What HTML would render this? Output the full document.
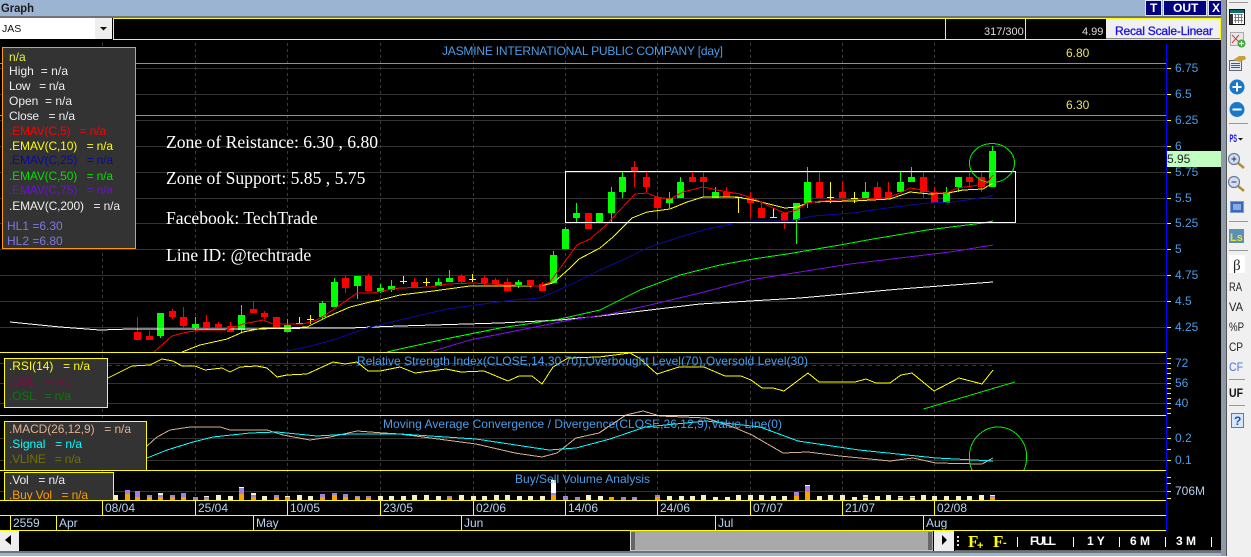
<!DOCTYPE html>
<html><head><meta charset="utf-8"><title>Graph</title>
<style>
html,body{margin:0;padding:0;background:#000;width:1251px;height:557px;overflow:hidden}
svg{display:block;position:absolute;left:0;top:0}
text{font-family:"Liberation Sans",sans-serif;font-size:12px;white-space:pre}
.ax{fill:#4a9de8}.dt{fill:#b8d4f0;font-size:12px}.s{fill:#4a9de8}
.lg{fill:#eee}
.ns{font-family:"Liberation Serif",serif;font-size:17.6px;fill:#fff}
.nb{fill:#fff;font-weight:bold;font-size:12px}
.sb{fill:#222;font-size:12px}
</style></head><body>
<svg width="1251" height="557" viewBox="0 0 1251 557" xmlns="http://www.w3.org/2000/svg">
<rect width="1251" height="557" fill="#000"/>
<!-- title bar -->
<rect width="1226" height="16" fill="#9ab4d2"/>
<rect y="16" width="1226" height="2" fill="#6f7276"/>
<text x="1" y="12" style="font-weight:bold;font-size:12px" fill="#1a1a1a" textLength="33" lengthAdjust="spacingAndGlyphs">Graph</text>
<g>
<rect x="1145.5" y=".5" width="16" height="15" fill="#000080" stroke="#dfe6ef"/>
<rect x="1163.5" y=".5" width="43" height="15" fill="#000080" stroke="#dfe6ef"/>
<rect x="1208.5" y=".5" width="16" height="15" fill="#000080" stroke="#dfe6ef"/>
<text x="1150" y="12" style="font-weight:bold;font-size:12px" fill="#fff">T</text>
<text x="1173" y="12" style="font-weight:bold;font-size:12px" fill="#fff">OUT</text>
<text x="1212" y="12" style="font-weight:bold;font-size:12px" fill="#fff">X</text>
</g>
<!-- toolbar -->
<rect x="0" y="18" width="112" height="21" fill="#fff"/>
<rect x="95" y="18" width="17" height="21" fill="#eee"/>
<path d="M100 27h7l-3.5 3.5z" fill="#111"/>
<text x="2" y="32" style="font-size:10.5px" fill="#111">JAS</text>
<rect x="113.5" y="18.5" width="1107" height="21" fill="#000" stroke="#ffff00"/>
<path d="M945.5 18V40M1025.5 18V40" stroke="#ffff00"/>
<rect x="1106" y="19" width="114" height="20" fill="#f0f0f0"/>
<path d="M1106 38.5H1220" stroke="#888"/>
<text x="1115" y="35" fill="#1a10e0" stroke="#1a10e0" stroke-width=".3" textLength="98" style="font-size:12px">Recal Scale-Linear</text>
<text x="984" y="35" fill="#ddd" style="font-size:11px">317/300</text>
<text x="1082" y="35" fill="#ddd" style="font-size:11px">4.99</text>
<!-- grid -->
<path d="M0 68.5H1166M0 94.5H1166M0 120.5H1166M0 146.5H1166M0 172.5H1166M0 198.5H1166M0 223.5H1166M0 249.5H1166M0 275.5H1166M0 301.5H1166M0 327.5H1166M0 363.5H1166M0 383.5H1166M0 403.5H1166M0 438.5H1166M0 460.5H1166M0 491.5H1166" stroke="#333" fill="none"/>
<path d="M102.5 43V500M195.5 43V500M287.5 43V500M380.5 43V500M473.5 43V500M565.5 43V500M657.5 43V500M750.5 43V500M842.5 43V500M934.5 43V500" stroke="#3a3a3a" stroke-dasharray="3 3" fill="none"/>
<path d="M0 63.5H1166M0 115.5H1166" stroke="#8a86d8"/>
<text x="1066" y="57" fill="#ece070">6.80</text>
<text x="1066" y="109" fill="#ece070">6.30</text>
<text x="442" y="55" class="s" textLength="281">JASMINE INTERNATIONAL PUBLIC COMPANY [day]</text>
<!-- candles -->
<g fill="none" shape-rendering="crispEdges">
<path stroke="#00ff00" stroke-width="1" d="M160.5 313V338M195.5 317V330M241.5 305V332M287.5 319V332M322.5 301V319M334.5 278V307M357.5 276V299M380.5 284V293M391.5 280V292M438.5 278V286M449.5 270V282M518.5 280V288M553.5 251V283M565.5 227V249M576.5 203V222M599.5 213V222M611.5 187V222M622.5 172V198M669.5 192V208M680.5 177V198M715.5 187V198M796.5 203V244M807.5 167V208M865.5 182V198M900.5 172V192M911.5 167V182M946.5 187V203M958.5 177V192M992.5 146V187"/>
<path stroke="#00ff00" stroke-width="7" d="M160.5 313V336M195.5 324V328M241.5 315V330M287.5 325V332M322.5 303V317M334.5 282V307M357.5 276V286M380.5 288V292M391.5 286V290M438.5 282V286M449.5 278V282M518.5 282V286M553.5 255V283M565.5 229V249M576.5 213V218M599.5 213V222M611.5 192V213M622.5 177V192M669.5 198V203M680.5 182V198M715.5 192V198M796.5 203V220M807.5 182V203M865.5 192V198M900.5 182V192M911.5 177V182M946.5 192V203M958.5 177V187M992.5 151V187"/>
<path stroke="#ff0000" stroke-width="1" d="M137.5 317V340M149.5 331V340M172.5 309V319M183.5 307V328M206.5 315V330M218.5 322V328M230.5 322V332M253.5 301V313M264.5 311V319M345.5 276V293M368.5 274V291M414.5 278V288M461.5 274V284M484.5 276V285M495.5 278V284M507.5 278V291M530.5 280V288M542.5 282V291M634.5 161V187M646.5 172V192M657.5 192V218M692.5 172V182M703.5 172V197M726.5 187V197M750.5 192V218M761.5 203V218M784.5 213V229M819.5 172V198M842.5 182V198M877.5 182V198M888.5 182V198M923.5 172V198M934.5 187V203M969.5 172V187M981.5 172V192"/>
<path stroke="#ff0000" stroke-width="7" d="M137.5 332V340M149.5 336V340M172.5 311V317M183.5 317V326M206.5 322V328M218.5 324V328M230.5 326V332M253.5 309V313M264.5 313V317M276.5 317V329M345.5 278V288M368.5 276V291M414.5 282V288M461.5 276V282M484.5 278V283M495.5 280V284M507.5 282V291M530.5 280V285M542.5 284V291M588.5 213V229M634.5 167V171M646.5 177V187M657.5 197V208M692.5 177V182M703.5 177V182M726.5 192V197M750.5 198V203M761.5 208V218M784.5 213V221M819.5 182V198M842.5 192V198M877.5 187V198M888.5 192V198M923.5 177V192M934.5 192V203M969.5 177V182M981.5 177V187"/>
<path stroke="#ffff00" stroke-width="1" d="M296 323.5H303M299.5 317V324M307 319.5H314M310.5 315V324M400 281.5H407M403.5 276V284M423 282.5H430M426.5 278V286M469 279.5H476M472.5 274V282M735 197.5H742M738.5 197V213M770 217.5H777M773.5 208V217M827 197.5H834M830.5 182V203M851 198.5H858M854.5 192V203"/>
</g>
<!-- EMAs -->
<g fill="none" stroke-width="1" shape-rendering="crispEdges">
<polyline stroke="#fff" points="10,322 60,327 100,330 130,329 250,329 317,328 350,328 373,327 400,326 500,323 560,320 600,316 700,304 800,298 900,289 993,282"/>
<polyline stroke="#00ff00" points="387,352 400,349 450,338 500,328 560,319 600,310 640,290 680,275 720,265 753,259 787,254 840,245 873,239 927,230 983,223 993,221"/>
<polyline stroke="#7a10e0" points="430,352 470,340 520,330 570,320 610,314 650,305 700,293 750,280 800,272 850,264 900,258 950,252 993,245"/>
<polyline stroke="#0a0aa0" points="280,352 307,347 333,340 367,328 400,320 447,309 513,300 540,298 570,285 600,270 625,259 647,248 680,237 707,229 737,223 753,221 790,221 813,216 853,213 887,208 927,203 953,202 987,197 993,195"/>
<polyline stroke="#ffff00" points="182,352 200,345 227,339 243,332 263,328 287,328 307,327 327,317 350,307 370,302 380,300 400,295 433,291 470,286 540,286 553,283 570,268 579,259 600,248 613,237 632,218 647,212 670,209 687,202 703,197 737,197 753,200 773,205 785,208 797,207 810,202 853,201 890,199 910,192 930,194 948,193 963,190 983,189 993,183"/>
<polyline stroke="#ff0000" points="154,352 172,336 183,333 200,330 225,330 243,324 263,320 273,324 303,324 317,320 333,310 357,293 373,293 387,290 400,288 430,287 447,284 473,283 507,285 540,286 550,282 566,260 577,245 590,239 605,226 620,210 635,194 647,193 657,197 670,199 683,192 703,187 717,190 740,194 757,200 773,208 785,213 797,210 807,203 820,201 887,198 900,193 910,188 923,190 933,193 947,193 957,188 973,186 987,183 993,175"/>
</g>
<!-- zone box and circles -->
<rect x="565.5" y="171.5" width="450" height="51" fill="none" stroke="#fff" stroke-width="1" shape-rendering="crispEdges"/>
<ellipse cx="992" cy="163" rx="22.5" ry="19.5" fill="none" stroke="#00ee00" stroke-width="1" shape-rendering="crispEdges"/>
<!-- notes -->
<text x="166" y="148" class="ns">Zone of Reistance: 6.30 , 6.80</text>
<text x="166" y="184" class="ns">Zone of Support: 5.85 , 5.75</text>
<text x="166" y="224" class="ns">Facebook: TechTrade</text>
<text x="166" y="261" class="ns">Line ID: @techtrade</text>
<!-- RSI -->
<path d="M108 365.5H993" stroke="#8a1048" stroke-dasharray="4 4" fill="none"/>
<polyline fill="none" stroke="#ffff00" shape-rendering="crispEdges" points="108,378 120,372 132,366 150,365 162,359 173,361 182,366 195,366 205,370 222,368 230,372 240,367 257,366 267,368 277,377 287,375 307,374 333,362 345,364 357,362 368,371 380,371 400,367 415,373 446,369 461,372 484,371 508,381 519,376 532,376 542,384 553,367 568,358 599,357 630,353 639,358 657,374 679,367 704,367 725,376 741,376 751,380 762,388 773,388 784,391 808,373 819,382 855,382 866,379 876,383 890,383 901,375 912,373 934,391 959,378 982,384 993,370"/>
<path d="M923.5 409L1015 382" stroke="#00ee00" stroke-width="1" fill="none" shape-rendering="crispEdges"/>
<text x="357" y="365" class="s" textLength="451">Relative Strength Index(CLOSE,14,30,70),Overbought Level(70),Oversold Level(30)</text>
<!-- MACD -->
<polyline fill="none" stroke="#d8b090" stroke-width="1" shape-rendering="crispEdges" points="147,446 157,437 170,430 190,427 220,427 230,430 267,430 283,435 310,440 330,437 357,431 383,433 400,434 438,439 476,444 515,453 542,457 557,453 576,438 599,433 626,415 643,411 660,416 706,418 733,427 752,435 783,453 808,452 840,456 890,461 913,458 936,463 982,464 993,458"/>
<polyline fill="none" stroke="#00ffff" stroke-width="1" shape-rendering="crispEdges" points="147,458 167,450 193,442 213,437 250,433 277,432 317,436 350,434 400,434 476,439 549,450 576,448 610,439 645,427 706,421 760,427 798,441 859,450 936,458 993,461"/>
<clipPath id="mc"><rect x="960" y="420" width="80" height="50"/></clipPath>
<ellipse cx="998" cy="457" rx="28.7" ry="30" fill="none" stroke="#00ee00" stroke-width="1" clip-path="url(#mc)" shape-rendering="crispEdges"/>
<text x="383" y="428" class="s" textLength="399">Moving Average Convergence / Divergence(CLOSE,26,12,9),Value Line(0)</text>
<!-- Volume -->
<g fill="none" stroke-width="5" shape-rendering="crispEdges">
<path stroke="#f5eecc" d="M115.5 495V500M160.5 493V500M218.5 495V500M230.5 496V500M264.5 496V500M287.5 496V500M299.5 495V500M310.5 496V500M380.5 496V500M391.5 496V500M403.5 496V500M414.5 495V500M426.5 495V500M438.5 496V500M461.5 495V500M473.5 496V500M484.5 496V500M496.5 495V500M507.5 495V500M519.5 496V500M530.5 496V500M542.5 496V500M588.5 495V500M600.5 496V500M669.5 496V500M681.5 496V500M692.5 496V500M703.5 495V500M715.5 497V500M727.5 497V500M738.5 495V500M750.5 495V500M761.5 495V500M773.5 496V500M784.5 496V500M819.5 496V500M830.5 495V500M842.5 495V500M854.5 497V500M865.5 495V500M877.5 496V500M888.5 495V500M900.5 496V500M912.5 496V500M923.5 495V500M934.5 496V500M946.5 496V500M958.5 496V500M969.5 496V500M981.5 495V500M992.5 495V500M206.5 496V500M345.5 494V500M253.5 493V500"/>
<path stroke="#fff" d="M241.5 487V488M553.5 480V493M807.5 485V486"/>
<path stroke="#a080e0" d="M127.5 490V494M137.5 491V497M149.5 495V497M160.5 495V497M172.5 495V497M183.5 493V497M195.5 497V500M206.5 497V499M241.5 488V494M253.5 495V497M276.5 495V497M322.5 494V497M334.5 493V495M345.5 494V497M357.5 496V497M368.5 496V498M449.5 496V498M553.5 493V495M565.5 496V500M577.5 497V500M623.5 497V500M634.5 497V499M657.5 495V497M796.5 492V496M807.5 486V492M865.5 497V498M900.5 497V498M912.5 497V498M992.5 496V497"/>
<path stroke="#ff9f00" d="M127.5 494V500M137.5 497V500M149.5 497V500M160.5 497V500M172.5 497V500M183.5 497V500M206.5 499V500M241.5 494V500M253.5 497V500M276.5 497V500M287.5 497V500M322.5 497V500M334.5 495V500M345.5 497V500M357.5 497V500M368.5 498V500M449.5 498V500M553.5 495V500M611.5 497V500M634.5 499V500M657.5 497V500M796.5 496V500M807.5 492V500M992.5 497V500"/>
</g>
<text x="515" y="483" class="s" textLength="135">Buy/Sell Volume Analysis</text>
<!-- dividers -->
<path d="M0 352.5H1166M0 415.5H1166M0 470.5H1166M0 500.5H1166M0 515.5H1166M0 530.5H1166" stroke="#ffff00" fill="none"/>
<path d="M102.5 500V515M195.5 500V515M287.5 500V515M380.5 500V515M473.5 500V515M565.5 500V515M657.5 500V515M750.5 500V515M842.5 500V515M934.5 500V515M10.5 515V530M56.5 515V530M253.5 515V530M461.5 515V530M715.5 515V530M923.5 515V530" stroke="#ffff00" fill="none"/>
<g class="dt">
<text x="105" y="512" class="dt">08/04</text><text x="198" y="512" class="dt">25/04</text><text x="290" y="512" class="dt">10/05</text><text x="383" y="512" class="dt">23/05</text><text x="476" y="512" class="dt">02/06</text><text x="568" y="512" class="dt">14/06</text><text x="660" y="512" class="dt">24/06</text><text x="753" y="512" class="dt">07/07</text><text x="845" y="512" class="dt">21/07</text><text x="937" y="512" class="dt">02/08</text>
<text x="13" y="527" class="dt">2559</text><text x="59" y="527" class="dt">Apr</text><text x="256" y="527" class="dt">May</text><text x="464" y="527" class="dt">Jun</text><text x="718" y="527" class="dt">Jul</text><text x="926" y="527" class="dt">Aug</text>
</g>
<!-- axis -->
<rect x="1166" y="43" width="1" height="488" fill="#0000ff"/>
<path d="M1167 68.5h4M1167 94.5h4M1167 120.5h4M1167 146.5h4M1167 172.5h4M1167 198.5h4M1167 223.5h4M1167 249.5h4M1167 275.5h4M1167 301.5h4M1167 327.5h4M1167 358.5h4M1167 363.5h4M1167 368.5h4M1167 373.5h4M1167 378.5h4M1167 383.5h4M1167 388.5h4M1167 393.5h4M1167 398.5h4M1167 403.5h4M1167 408.5h4M1167 413.5h4M1167 427.5h4M1167 438.5h4M1167 449.5h4M1167 460.5h4M1167 477.5h4M1167 483.5h4M1167 491.5h4M1167 498.5h4" stroke="#ffff00" fill="none"/>
<text x="1175" y="72" class="ax">6.75</text><text x="1175" y="98" class="ax">6.5</text><text x="1175" y="124" class="ax">6.25</text><text x="1175" y="150" class="ax">6</text>
<text x="1175" y="176" class="ax">5.75</text><text x="1175" y="202" class="ax">5.5</text><text x="1175" y="227" class="ax">5.25</text><text x="1175" y="253" class="ax">5</text><text x="1175" y="279" class="ax">4.75</text><text x="1175" y="305" class="ax">4.5</text><text x="1175" y="331" class="ax">4.25</text>
<text x="1175" y="367" class="ax">72</text><text x="1175" y="387" class="ax">56</text><text x="1175" y="407" class="ax">40</text>
<text x="1175" y="442" class="ax">0.2</text><text x="1175" y="464" class="ax">0.1</text>
<text x="1175" y="495" fill="#b4cfe8">706M</text>
<rect x="1167" y="151" width="54" height="16" fill="#c0ffc0"/>
<text x="1167" y="163" fill="#222">5.95</text>
<!-- legend -->
<rect x="2.5" y="47.500" width="133" height="201" fill="#333" stroke="#ff9c00"/>
<g>
<text x="9" y="61" fill="#e8f040">n/a</text>
<text x="9" y="75" class="lg" textLength="59">High  = n/a</text>
<text x="9" y="90" class="lg" textLength="56">Low   = n/a</text>
<text x="9" y="105" class="lg" textLength="63">Open  = n/a</text>
<text x="9" y="120" class="lg" textLength="66">Close   = n/a</text>
<text x="9" y="135" fill="#ff0000" textLength="97">.EMAV(C,5)   = n/a</text>
<text x="9" y="150" fill="#ffff00" textLength="104">.EMAV(C,10)   = n/a</text>
<text x="9" y="164" fill="#0a0aa0" textLength="104">.EMAV(C,25)   = n/a</text>
<text x="9" y="180" fill="#00e000" textLength="104">.EMAV(C,50)   = n/a</text>
<text x="9" y="194" fill="#6a10d8" textLength="104">.EMAV(C,75)   = n/a</text>
<text x="9" y="210" fill="#eee" textLength="111">.EMAV(C,200)   = n/a</text>
<text x="7" y="230" fill="#7a78e0">HL1 =6.30</text>
<text x="7" y="245" fill="#7a78e0">HL2 =6.80</text>
</g>
<rect x="4.5" y="358.5" width="103" height="49" fill="#333" stroke="#ffff00"/>
<text x="9" y="370" fill="#ffff00" textLength="81">.RSI(14)   = n/a</text>
<text x="9" y="385" fill="#7a1040" textLength="62">.OBL   = n/a</text>
<text x="9" y="400" fill="#0a7a0a" textLength="62">.OSL   = n/a</text>
<rect x="4.5" y="421.5" width="142" height="49" fill="#333" stroke="#ffff00"/>
<text x="9" y="433" fill="#e0b090" textLength="122">.MACD(26,12,9)   = n/a</text>
<text x="9" y="448" fill="#00ffff" textLength="73">.Signal   = n/a</text>
<text x="9" y="463" fill="#707000" textLength="72">.VLINE   = n/a</text>
<clipPath id="vc"><rect x="4" y="472" width="110" height="28"/></clipPath>
<g clip-path="url(#vc)">
<rect x="4.5" y="472.5" width="109" height="40" fill="#333" stroke="#ffff00"/>
<text x="9" y="484" fill="#eee" textLength="56">.Vol   = n/a</text>
<text x="9" y="499" fill="#ff9c00" textLength="79">.Buy Vol   = n/a</text>
</g>
<!-- scrollbar row -->
<rect x="0" y="531" width="19" height="20" fill="#eee"/>
<path d="M11 535v10l-6-5z" fill="#000"/>
<rect x="630" y="531" width="303" height="20" fill="#a9a9a9"/>
<path d="M630.5 531V551H933" stroke="#ddd" fill="none"/>
<rect x="631" y="532" width="4" height="18" fill="#666"/>
<rect x="928" y="532" width="4" height="18" fill="#666"/>
<rect x="934" y="531" width="20" height="20" fill="#eee"/>
<path d="M942 535v10l5-5z" fill="#000"/>
<path d="M958 536v2M958 540v2M958 544v2" stroke="#ddd" stroke-width="2"/>
<path d="M955 551H1221" stroke="#ccc"/>
<text x="968" y="547" style="font-family:'Liberation Serif',serif;font-weight:bold;font-size:17px" fill="#ffff00">F</text>
<text x="977" y="549" style="font-weight:bold;font-size:11px" fill="#ffff00">+</text>
<text x="993" y="547" style="font-family:'Liberation Serif',serif;font-weight:bold;font-size:17px" fill="#ffff00">F</text>
<text x="1003" y="546" style="font-weight:bold;font-size:11px" fill="#ffff00">-</text>
<path d="M1017.5 537v10M1073.5 537v10M1119.5 537v10M1165.5 537v10M1211.5 537v10" stroke="#fff" fill="none"/>
<text x="1030" y="545" class="nb" textLength="26">FULL</text>
<text x="1087" y="545" class="nb">1 Y</text>
<text x="1130" y="545" class="nb">6 M</text>
<text x="1176" y="545" class="nb">3 M</text>
<rect x="0" y="551" width="1226" height="2" fill="#6f7276"/>
<rect x="0" y="553" width="1226" height="3" fill="#9ab4d2"/>
<rect x="0" y="556" width="1251" height="1" fill="#fff"/>
<!-- sidebar -->
<rect x="1221" y="0" width="6" height="556" fill="#8f9aa8"/>
<rect x="1226" y="0" width="1" height="556" fill="#555"/>
<rect x="1227" y="0" width="24" height="557" fill="#f0f0f0"/>
<path d="M1229 2.5h19M1229 123.5h19M1229 221.5h19M1229 250.5h19M1229 379.5h16M1229 405.5h16" stroke="#999" fill="none"/>
<!-- calendar -->
<rect x="1229.5" y="9.5" width="15" height="15" fill="#fff" stroke="#111"/>
<rect x="1230" y="10" width="14" height="3" fill="#0d6b6b"/>
<path d="M1234 14.5h9M1234 17.5h9M1234 20.5h9M1235.5 14v9M1238.5 14v9M1241.5 14v9" stroke="#666" stroke-width=".8" fill="none"/>
<rect x="1230" y="14" width="3" height="10" fill="#333"/>
<!-- chart plus -->
<rect x="1230.5" y="32.5" width="13" height="13" fill="#e8e8e8" stroke="#aaa"/>
<path d="M1232 35l9 9M1232 43l7-8" stroke="#d04040" fill="none"/>
<circle cx="1241.5" cy="43.5" r="4" fill="#3aa63a"/>
<path d="M1239 43.5h5M1241.5 41v5" stroke="#fff" stroke-width="1.2"/>
<!-- note -->
<rect x="1229.5" y="60.5" width="12" height="10" fill="#dfe8f4" stroke="#667"/>
<path d="M1231 63.5h9M1231 65.5h9M1231 67.5h9" stroke="#3a5a90"/>
<path d="M1233 60l6-4h6l1 3-6 3z" fill="#c8a040"/>
<!-- plus / minus -->
<circle cx="1237" cy="87" r="7.5" fill="#1a78c8"/>
<path d="M1232.5 87h9M1237 82.5v9" stroke="#fff" stroke-width="2"/>
<circle cx="1237" cy="109.5" r="7.5" fill="#1a78c8"/>
<path d="M1232.5 109.5h9" stroke="#fff" stroke-width="2"/>
<!-- PS -->
<text x="1229.5" y="142" fill="#1010ee" style="font-weight:bold;font-size:11px" textLength="7.5" lengthAdjust="spacingAndGlyphs">PS</text>
<path d="M1238 138h5l-2.5 2.5z" fill="#111"/>
<!-- magnifiers -->
<line x1="1238" y1="163" x2="1244" y2="168" stroke="#b09030" stroke-width="2.5"/>
<circle cx="1234" cy="159" r="5.5" fill="#cfe0f5" stroke="#6a7a94" stroke-width="1.2"/>
<path d="M1231.5 159h5M1234 156.5v5" stroke="#335" fill="none"/>
<line x1="1238" y1="186" x2="1244" y2="191" stroke="#b09030" stroke-width="2.5"/>
<circle cx="1234" cy="182" r="5.5" fill="#cfe0f5" stroke="#6a7a94" stroke-width="1.2"/>
<path d="M1231.5 182h5" stroke="#335" fill="none"/>
<!-- window -->
<rect x="1230.5" y="201.5" width="13" height="11" fill="#3a68c0" stroke="#7a9ad0"/>
<path d="M1233 205h8M1233 207h8M1233 209h8" stroke="#dfe8f8"/>
<!-- Ls -->
<rect x="1229" y="229" width="15" height="14" fill="#5a90b8"/>
<text x="1230" y="241" style="font-weight:bold;font-size:11px" fill="#e8e040">Ls</text>
<!-- beta -->
<rect x="1229" y="255" width="16" height="18" fill="#fff"/>
<text x="1233" y="270" style="font-family:'Liberation Serif',serif;font-size:15px" fill="#222">β</text>
<text x="1229" y="291" class="sb" textLength="13" lengthAdjust="spacingAndGlyphs">RA</text>
<text x="1229" y="311" class="sb" textLength="14" lengthAdjust="spacingAndGlyphs">VA</text>
<text x="1229" y="331" class="sb" textLength="15" lengthAdjust="spacingAndGlyphs">%P</text>
<text x="1229" y="351" class="sb" textLength="14" lengthAdjust="spacingAndGlyphs">CP</text>
<text x="1229" y="371" fill="#4a70e0" textLength="14" lengthAdjust="spacingAndGlyphs">CF</text>
<text x="1229" y="397" style="font-weight:bold;font-size:12px" fill="#111" textLength="14" lengthAdjust="spacingAndGlyphs">UF</text>
<rect x="1231.5" y="413.5" width="12" height="14" fill="#d8e8fa" stroke="#5a7ab0"/>
<text x="1234" y="425" style="font-weight:bold;font-size:12px" fill="#1a50b0">?</text>
</svg>
</body></html>
